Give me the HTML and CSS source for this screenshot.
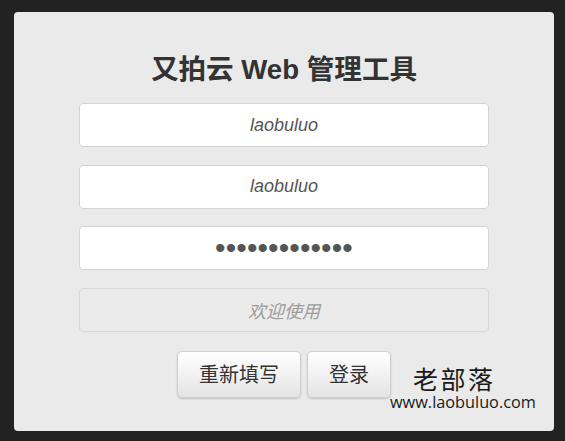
FILE: index.html
```html
<!DOCTYPE html>
<html lang="zh-CN">
<head>
<meta charset="utf-8">
<title>又拍云 Web 管理工具</title>
<link rel="stylesheet" href="styles.css">
</head>
<body>
<div class="card">
  <h1 class="title">又拍云 Web 管理工具</h1>
  <form class="form">
    <input class="field" type="text" value="laobuluo">
    <input class="field" type="text" value="laobuluo">
    <input class="field field-pass" type="password" value="laobuluo12345">
    <input class="field field-disabled" type="text" placeholder="欢迎使用" disabled>
    <div class="actions">
      <button class="btn" type="reset">重新填写</button>
      <button class="btn" type="button">登录</button>
    </div>
  </form>
  <div class="watermark">
    <div class="wm-name">老部落</div>
    <div class="wm-url">www.laobuluo.com</div>
  </div>
</div>
</body>
</html>
```

FILE: styles.css
```css
html, body {
  margin: 0;
  padding: 0;
  background: #222222;
}

body {
  width: 565px;
  height: 441px;
  overflow: hidden;
  font-family: "Liberation Sans", "Noto Sans CJK SC", sans-serif;
}

.card {
  position: relative;
  box-sizing: border-box;
  width: 540px;
  height: 419px;
  margin: 12px 0 0 14px;
  padding-top: 40px;
  background: #eaeaea;
  border-radius: 4px;
}

.title {
  margin: 0;
  font-size: 27.6px;
  line-height: 36px;
  font-weight: bold;
  color: #333333;
  text-align: center;
}

.form {
  margin: 15px 0 0;
  display: flex;
  flex-direction: column;
  align-items: center;
  gap: 17.5px;
}

.field {
  box-sizing: border-box;
  display: block;
  width: 410px;
  height: 44px;
  margin: 0;
  padding: 0 10px;
  border: 1px solid #d4d4d4;
  border-radius: 4px;
  background: #ffffff;
  color: #555555;
  font-family: "Liberation Sans", "Noto Sans CJK SC", sans-serif;
  font-size: 18px;
  font-style: italic;
  text-align: center;
  outline: none;
}

.field-pass {
  font-style: normal;
  font-size: 30px;
  letter-spacing: 0.1px;
  color: #555555;
}

.field-disabled {
  background: #ebebeb;
  border-color: #d8d8d8;
  font-family: "Noto Sans CJK SC", sans-serif;
}

.field-disabled::placeholder {
  color: #9c9c9c;
  font-style: italic;
  opacity: 1;
}

.actions {
  display: flex;
  gap: 6px;
  margin-top: 1.5px;
}

.btn {
  box-sizing: border-box;
  height: 47px;
  padding: 0 21px;
  border: 1px solid #d0d0d0;
  border-radius: 5px;
  background: linear-gradient(#ffffff, #e4e4e4);
  box-shadow: 0 1px 2px rgba(0, 0, 0, 0.18);
  color: #333333;
  font-family: "Noto Sans CJK SC", sans-serif;
  font-size: 20px;
  line-height: 1;
}

.watermark {
  position: absolute;
  left: 376px;
  top: 352px;
  color: #1a1a1a;
}

.wm-name {
  font-family: "Noto Sans CJK SC", sans-serif;
  font-size: 25px;
  line-height: 28px;
  letter-spacing: 2.5px;
  padding-left: 23px;
}

.wm-url {
  margin-top: 1px;
  font-family: "Open Sans", "DejaVu Sans", sans-serif;
  font-size: 16.3px;
  line-height: 18px;
}
```
